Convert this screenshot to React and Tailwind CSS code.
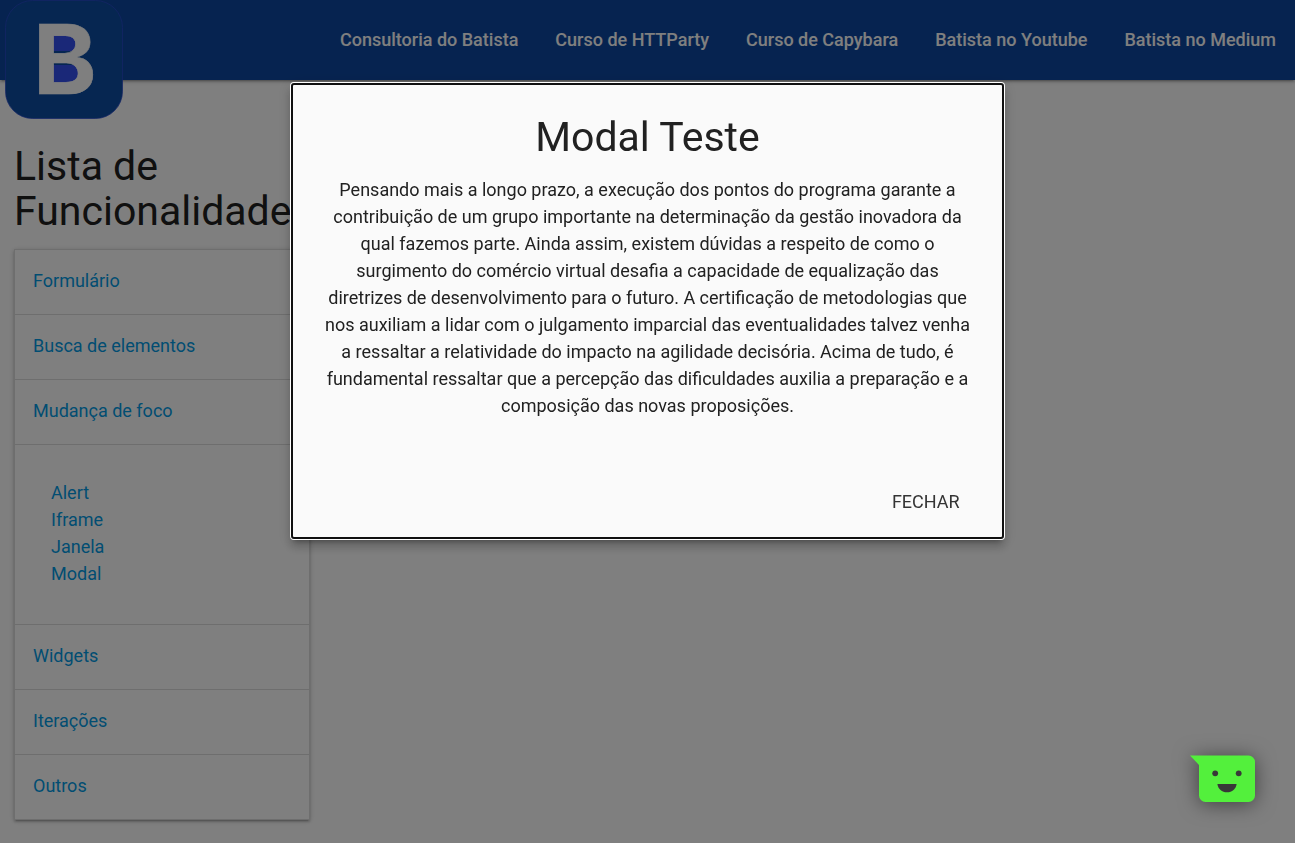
import React, { useState } from "react";

const navLinks = [
  "Consultoria do Batista",
  "Curso de HTTParty",
  "Curso de Capybara",
  "Batista no Youtube",
  "Batista no Medium",
];

const sections = [
  { title: "Formulário" },
  { title: "Busca de elementos" },
  { title: "Mudança de foco", items: ["Alert", "Iframe", "Janela", "Modal"] },
  { title: "Widgets" },
  { title: "Iterações" },
  { title: "Outros" },
];

function Logo() {
  return (
    <svg viewBox="0 0 118 119" className="block h-[119px] w-[118px]" aria-hidden="true">
      <rect x="0.5" y="0.5" width="117" height="118" rx="27" fill="#0d4ca3" stroke="#2a48d0" strokeOpacity="0.7" />
      <rect x="44" y="32" width="34" height="54" fill="#3450f0" />
      <path d="M44 51h34v14H44zM78 30h10v60H78z" fill="#0d4ca3" />
      <text x="28" y="94" fontFamily="Inter, sans-serif" fontWeight="700" fontSize="96" fill="#fff" stroke="#fff" strokeWidth="0.6">
        B
      </text>
    </svg>
  );
}

function Header() {
  return (
    <header className="flex h-20 items-start justify-between bg-[#0d47a1] shadow-[0_2px_2px_0_rgba(0,0,0,0.14),0_3px_1px_-2px_rgba(0,0,0,0.12),0_1px_5px_0_rgba(0,0,0,0.2)]">
      <a href="#inicio" aria-label="Batista" className="ml-[5px] shrink-0">
        <Logo />
      </a>
      <nav className="flex h-full items-center gap-[37px] pr-[19px] pb-0.5">
        {navLinks.map((label) => (
          <a key={label} href="#nav" className="text-[18px] leading-[27px] font-medium whitespace-nowrap text-white">
            {label}
          </a>
        ))}
      </nav>
    </header>
  );
}

function Sidebar() {
  return (
    <aside className="w-1/4 px-3.5 pt-16">
      <h1 className="text-[41px] leading-[45px]">Lista de Funcionalidades</h1>
      <ul className="mt-[15px] border border-b-0 border-[#ddd] shadow-[0_2px_2px_0_rgba(0,0,0,0.14),0_3px_1px_-2px_rgba(0,0,0,0.12),0_1px_5px_0_rgba(0,0,0,0.2)]">
        {sections.map(({ title, items }) => (
          <li key={title}>
            <div className="flex h-[65px] items-center border-b border-[#ddd] px-[18px] pb-1">
              <a href="#secao" className="text-[#039be5]">{title}</a>
            </div>
            {items && (
              <ul className="border-b border-[#ddd] px-9 pt-[34px] pb-[37px]">
                {items.map((item) => (
                  <li key={item}>
                    <a href="#item" className="text-[#039be5]">{item}</a>
                  </li>
                ))}
              </ul>
            )}
          </li>
        ))}
      </ul>
    </aside>
  );
}

function Modal({ onClose }) {
  return (
    <>
      <div className="fixed inset-0 bg-black/50" />
      <div className="fixed inset-0 flex items-start justify-center pt-[83px]">
        <section
          role="dialog"
          aria-modal="true"
          aria-labelledby="modal-title"
          className="w-[55%] rounded-[3px] border-2 border-[#101010] bg-[#fafafa] shadow-[0_0_0_1px_#fff,0_8px_10px_1px_rgba(0,0,0,0.14),0_3px_14px_2px_rgba(0,0,0,0.12),0_5px_5px_-3px_rgba(0,0,0,0.3)]"
        >
          <div className="px-[26px] pt-[30px] text-center">
            <h2 id="modal-title" className="text-[41px] leading-[45px]">Modal Teste</h2>
            <p className="mt-4">
              Pensando mais a longo prazo, a execução dos pontos do programa garante a contribuição de um grupo
              importante na determinação da gestão inovadora da qual fazemos parte. Ainda assim, existem dúvidas a
              respeito de como o surgimento do comércio virtual desafia a capacidade de equalização das diretrizes de
              desenvolvimento para o futuro. A certificação de metodologias que nos auxiliam a lidar com o julgamento
              imparcial das eventualidades talvez venha a ressaltar a relatividade do impacto na agilidade decisória.
              Acima de tudo, é fundamental ressaltar que a percepção das dificuldades auxilia a preparação e a
              composição das novas proposições.
            </p>
          </div>
          <footer className="mt-12 flex h-[70px] items-center justify-end px-[22px]">
            <button type="button" onClick={onClose} className="h-9 px-5 text-[18px] leading-9 text-[#343434] uppercase">
              Fechar
            </button>
          </footer>
        </section>
      </div>
    </>
  );
}

function ChatButton() {
  return (
    <button type="button" aria-label="Abrir chat" className="fixed right-10 bottom-[41px]">
      <svg viewBox="0 0 65 47" className="block h-[47px] w-[65px] overflow-visible drop-shadow-[0_2px_10px_rgba(0,0,0,0.5)]" aria-hidden="true">
        <path d="M0 0.5H58.500a6.500 6.500 0 0 1 6.500 6.500V40.500a6.500 6.500 0 0 1-6.500 6.500H15.500a6.500 6.500 0 0 1-6.500-6.500V10Z" fill="#53f03c" />
        <circle cx="25.200" cy="18.300" r="2.900" fill="#383838" />
        <circle cx="48.700" cy="18.300" r="2.900" fill="#383838" />
        <path d="M27.400 29h19.200c-.6 5-4.500 8.300-9.600 8.300s-9-3.300-9.600-8.300Z" fill="#383838" />
      </svg>
    </button>
  );
}

export default function App() {
  const [open, setOpen] = useState(true);
  return (
    <div className="min-h-screen bg-white font-[Roboto,'Liberation_Sans',sans-serif] text-[18px] leading-[27px] text-[#212121]">
      <Header />
      <main>
        <Sidebar />
      </main>
      {open && <Modal onClose={() => setOpen(false)} />}
      <ChatButton />
    </div>
  );
}
